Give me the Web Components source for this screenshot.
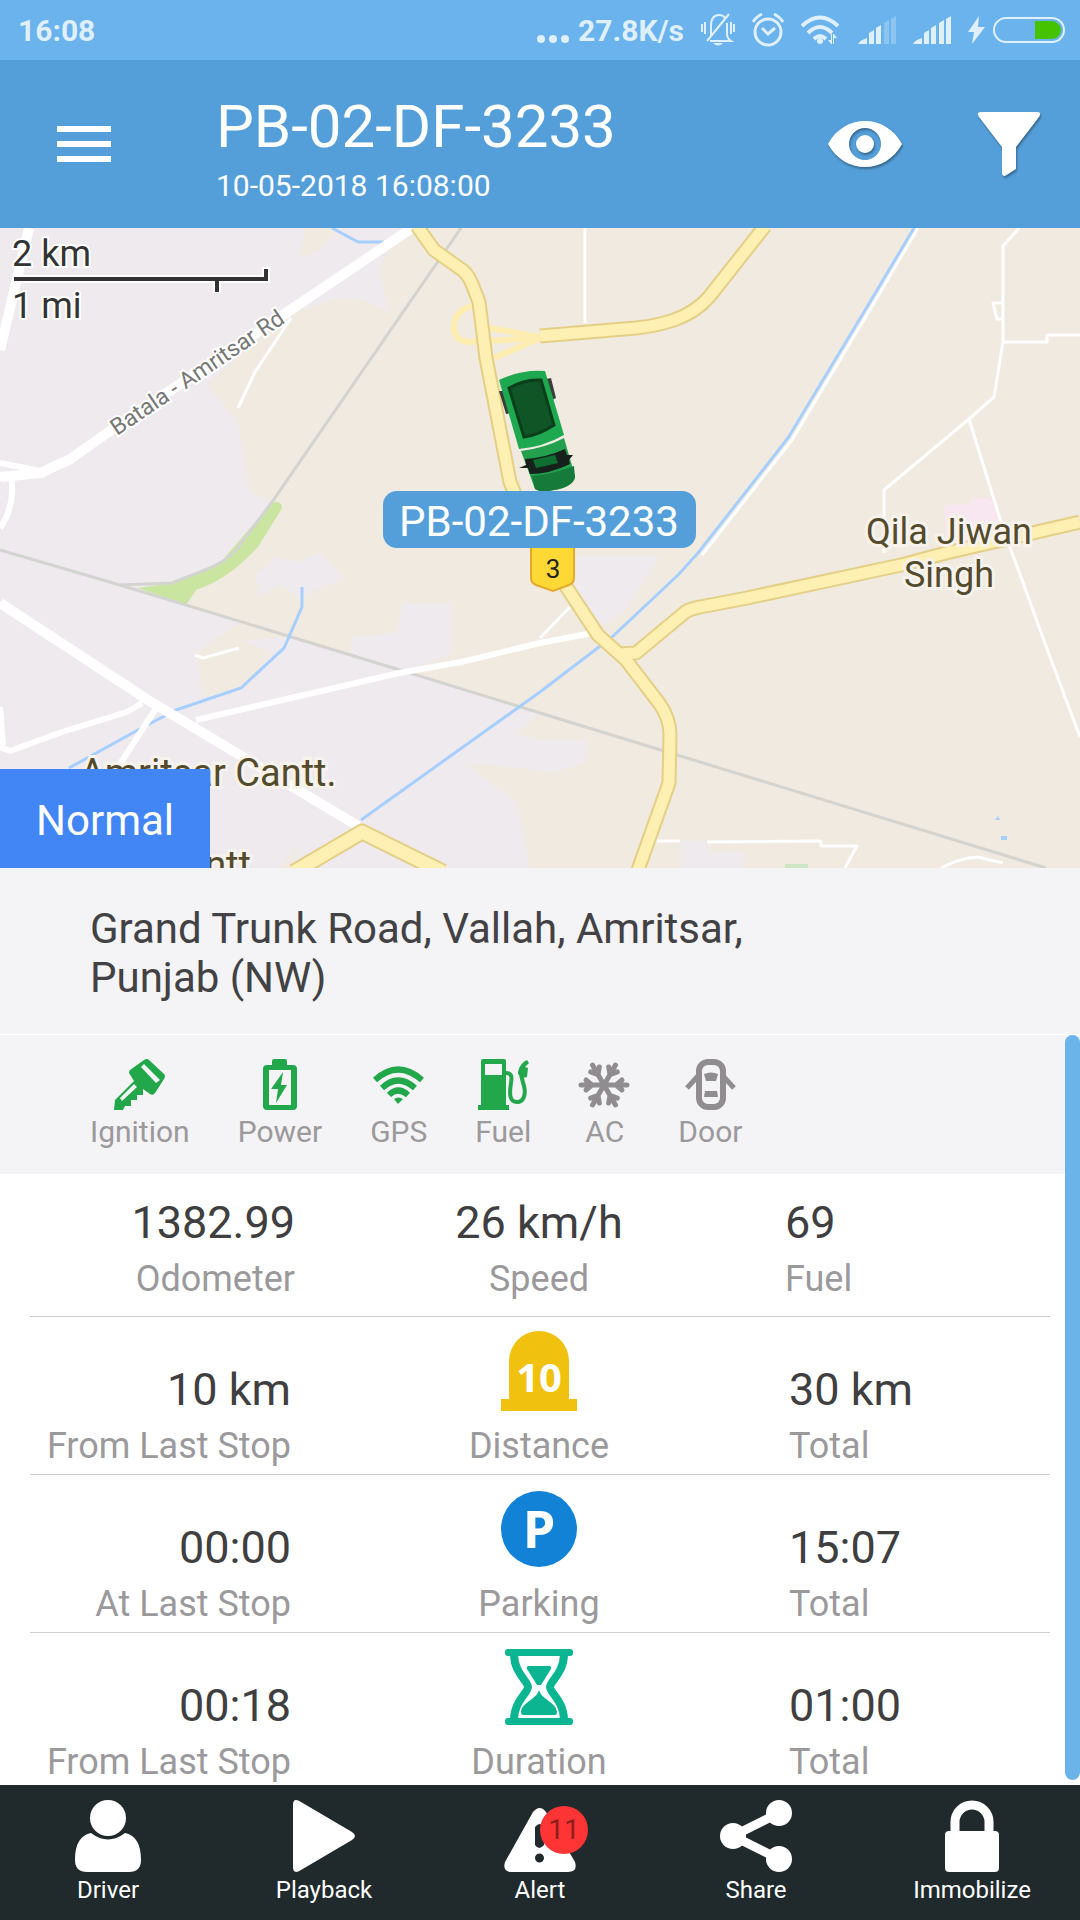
<!DOCTYPE html>
<html lang="en">
<head>
<meta charset="utf-8">
<meta name="viewport" content="width=device-width, initial-scale=1">
<title>PB-02-DF-3233</title>
<style>
  html, body {
    margin: 0;
    height: 100%;
  }
  body {
    font-family: Roboto, "Liberation Sans", sans-serif;
    background: #fff;
  }
</style>
</head>
<body>
<vehicle-page></vehicle-page>

<script>
  // Every icon of the app: [width, height, markup]
  const ICONS = {
    dots: [34, 10, `<circle cx="5" cy="5" r="4"/><circle cx="17" cy="5" r="4"/><circle cx="29" cy="5" r="4"/>`],
    mute: [34, 34, `
      <g fill="none" stroke="currentColor" stroke-width="2">
        <path d="M10 23V13c0-7 3-11 8-11 3 0 5 1 6 3M26 10v11c0 3 1 5 4 7H9M6 28L28 1"/>
        <path d="M4 9v12M1 11v8M30 9v12M33 11v8"/>
      </g>
      <path d="M12 30h10q-5 5-10 0z"/>`],
    alarm: [32, 34, `
      <g fill="none" stroke="currentColor">
        <circle cx="16" cy="19" r="13" stroke-width="3"/>
        <path d="M10 15l6 6 7-6" stroke-width="3"/>
        <path d="M1 9q3-5 9-8M31 9q-3-5-9-8" stroke-width="3"/>
      </g>`],
    netWifi: [40, 30, `
      <g fill="none" stroke="currentColor" stroke-width="4">
        <path d="M1 11q18-17 36 0M7 18q12-12 24 0M13 24q6-6 12 0"/>
      </g>
      <circle cx="19" cy="26" r="3"/>
      <path d="M30 19h1v10h-1l-3-4h3zM33 29h-1V19h1l3 4h-3z"/>`],
    signalLow: [38, 28, `
      <path d="M0 28q2-4 9-6v6zM11 17l5-3v14h-5zM18 12l5-3v19h-5z"/>
      <path opacity=".3" d="M26 7l5-3v24h-5zM33 3l5-3v28h-5z"/>`],
    signal: [38, 28, `<path d="M0 28q2-4 9-6v6zM11 17l5-3v14h-5zM18 12l5-3v19h-5zM26 7l5-3v24h-5zM33 3l5-3v28h-5z"/>`],
    charge: [17, 28, `<path d="M11 0L0 16h6L4 28l13-17h-7z"/>`],
    battery: [72, 26, `
      <rect x="1" y="1" width="70" height="24" rx="12" fill="none" stroke="currentColor" stroke-width="2"/>
      <path fill="#45c300" d="M42 4h17a9 9 0 0 1 0 18H42z"/>`],
    menu: [54, 36, `<path d="M0 0h54v6H0zM0 15h54v6H0zM0 30h54v6H0z"/>`],
    eye: [74, 46, `
      <path fill-rule="evenodd" d="M0 23C8 8 22 0 37 0s29 8 37 23C66 38 52 46 37 46S8 38 0 23zm21 0a16 16 0 1 0 32 0a16 16 0 1 0-32 0z"/>
      <circle cx="37" cy="23" r="9"/>`],
    filter: [62, 64, `<path d="M3 0h56q5 0 2 5L38 35v22l-11 7q-3 0-3-3V35L1 5q-3-5 2-5z"/>`],
    key: [51, 51, `
      <path fill-rule="evenodd" d="M30 1q3-2 5 0l15 14q2 2 0 5l-9 14q-2 3-5 1l-7-5v6h-6v5h-6v6h-6l-2 4H0l1-10L20 22l-5-8q0-2 1-3zM30 5l-3 3 15 16 4-3zM20 25L6 39l2 3 15-14z"/>`],
    power: [34, 51, `
      <path fill-rule="evenodd" d="M12 0h10q2 0 2 2v4h6q4 0 4 4v37q0 4-4 4H4q-4 0-4-4V10q0-4 4-4h5V2q0-2 3-2zM6 11v35h22V11z"/>
      <path d="M20 13L8 30h7l-2 14 11-18h-6z"/>`],
    gps: [51, 38, `
      <g fill="none" stroke="currentColor" stroke-width="6">
        <path d="M2 14Q25-7 49 14M9 22Q25 7 42 22M16 29Q25 20 35 29"/>
      </g>
      <path d="M21 33q4-3 9 0l-5 5z"/>`],
    fuel: [51, 51, `
      <path fill-rule="evenodd" d="M5 0h21q2 0 2 2v44h3v5H0v-5h3V2q0-2 2-2zM7 5v11h17V5z"/>
      <path fill="none" stroke="currentColor" stroke-width="4" d="M28 14c6 0 6 4 5 10-2 12-1 19 6 19s9-8 7-16l-3-11"/>
      <path d="M49 1l2 3-4 4 3 1-1 9-5 1-4-4c0-6 4-12 9-14z"/>`],
    ac: [51, 46, `
      <g fill="none" stroke="currentColor" stroke-width="5" stroke-linecap="round">
        ${[0, 60, 120, 180, 240, 300].map(a =>
          `<path transform="rotate(${a} 25 23)" d="M25 23h23M43 18l-6 5 6 5"/>`).join("")}
      </g>`],
    door: [51, 51, `
      <rect x="14" y="3" width="24" height="45" rx="9" fill="none" stroke="currentColor" stroke-width="6"/>
      <path d="M19 15q7-3 14 0l-2 7H21zM20 32h12l1 6H19z"/>
      <path fill="none" stroke="currentColor" stroke-width="5" d="M13 17L2 29M38 17l11 12"/>`],
    distance: [76, 80, `
      <path fill="#f0c20f" d="M0 68h8V30a30 30 0 0 1 60 0v38h8v12H0z"/>
      <text x="38" y="61" text-anchor="middle" font-family="Open Sans" font-weight="700" font-size="40" fill="#fff">10</text>`],
    parking: [76, 76, `
      <circle cx="38" cy="38" r="38" fill="#1182d5"/>
      <text x="38" y="57" text-anchor="middle" font-family="Open Sans" font-weight="700" font-size="52" fill="#fff">P</text>`],
    duration: [68, 76, `
      <g fill="#0bb592">
        <rect width="68" height="7" rx="3"/><rect y="69" width="68" height="7" rx="3"/>
        <path d="M23 17h22q2 1 1 3L36 36h-4L22 20q-1-2 1-3zM34 41c3 10 17 12 18 22q0 3-2 3H18q-2 0-2-3c1-10 15-12 18-22z"/>
        <path fill="none" stroke="#0bb592" stroke-width="8" d="M9 5c0 19 14 27 14 33S9 52 9 71M59 5c0 19-14 27-14 33s14 14 14 33"/>
      </g>`],
    driver: [66, 72, `
      <ellipse cx="33" cy="18" rx="18" ry="18"/>
      <path d="M16 33q17 13 34 0c10 2 16 10 16 27q0 12-12 12H12Q0 72 0 60C0 43 6 35 16 33z"/>`],
    playback: [62, 72, `<path d="M0 5q0-8 8-3l51 30q6 4 0 8L8 70q-8 5-8-3z"/>`],
    alert: [72, 64, `
      <path fill-rule="evenodd" d="M29 4q7-8 13 0l29 50q3 10-7 10H8q-10 0-7-10zM31 19v18q4 6 9 0V19q-4-6-9 0zM31 50a4 4 0 1 0 9 0a4 4 0 1 0-9 0z"/>`],
    share: [72, 72, `
      <path fill="none" stroke="currentColor" stroke-width="9" d="M59 13L13 36l46 23"/>
      <circle cx="59" cy="13" r="13"/><circle cx="13" cy="36" r="13"/><circle cx="59" cy="59" r="13"/>`],
    lock: [54, 72, `
      <path fill="none" stroke="currentColor" stroke-width="9" d="M10 34V22a17 17 0 0 1 34 0v12"/>
      <rect y="31" width="54" height="41" rx="4"/>`],
  };

  class AppIcon extends HTMLElement {
    constructor() {
      super();
      this.attachShadow({ mode: "open" });
    }
    connectedCallback() {
      const [w, h, body] = ICONS[this.getAttribute("name")];
      this.shadowRoot.innerHTML = `
        <style>
          :host { display: block; flex: none; }
          svg { display: block; fill: currentColor; overflow: visible; }
        </style>
        <svg width="${w}" height="${h}" viewBox="0 0 ${w} ${h}" aria-hidden="true">${body}</svg>`;
    }
  }

  class StatusBar extends HTMLElement {
    constructor() {
      super();
      this.attachShadow({ mode: "open" }).innerHTML = `
        <style>
          :host {
            display: flex;
            align-items: center;
            justify-content: space-between;
            height: 60px;
            padding: 0 15px 0 18px;
            background: #6ab3ec;
            color: #dfeffb;
            font-size: 30px;
            font-weight: 700;
          }
          .tray { display: flex; align-items: center; gap: 17px; }
          .net { display: flex; align-items: center; gap: 8px; }
          .dots { padding-top: 18px; }
          .bat { display: flex; align-items: center; gap: 8px; }
        </style>
        <span>16:08</span>
        <div class="tray">
          <span class="net"><app-icon class="dots" name="dots"></app-icon>27.8K/s</span>
          <app-icon name="mute"></app-icon>
          <app-icon name="alarm"></app-icon>
          <app-icon name="netWifi"></app-icon>
          <app-icon name="signalLow"></app-icon>
          <app-icon name="signal"></app-icon>
          <span class="bat"><app-icon name="charge"></app-icon><app-icon name="battery"></app-icon></span>
        </div>`;
    }
  }

  class AppHeader extends HTMLElement {
    constructor() {
      super();
      this.attachShadow({ mode: "open" }).innerHTML = `
        <style>
          :host {
            display: flex;
            align-items: center;
            height: 168px;
            padding: 0 40px 0 57px;
            box-sizing: border-box;
            background: #549fd9;
            color: #fff;
          }
          button {
            padding: 0;
            border: 0;
            background: none;
            color: inherit;
          }
          .titles { flex: 1; padding: 14px 0 0 105px; }
          .actions { display: flex; align-items: center; gap: 76px; }
          .actions app-icon { filter: drop-shadow(1px 2px 1px rgba(0, 0, 0, .35)); }
          ::slotted(h1) { margin: 0; font-size: 60px; line-height: 70px; font-weight: 400; }
          ::slotted(p) { margin: 0; font-size: 30px; line-height: 48px; }
        </style>
        <button aria-label="Menu"><app-icon name="menu"></app-icon></button>
        <div class="titles"><slot></slot></div>
        <div class="actions">
          <button aria-label="View"><app-icon name="eye"></app-icon></button>
          <button aria-label="Filter"><app-icon name="filter"></app-icon></button>
        </div>`;
    }
  }

  class MapView extends HTMLElement {
    constructor() {
      super();
      const main = "M417 226L434 250 458 267Q468 273 472 284L479 302 486 358 510 482 530 530 567 588 598 635 626 660 659 703Q670 718 670 735L669 783 638 870";
      const branch = "M620 654L636 653 683 614Q688 609 700 607L747 598 901 565 946 553 1080 522";
      const upper = "M765 226L709 297Q696 312 674 320 656 326 636 328L540 336";
      const fork = "M294 872L362 832 443 872";
      this.attachShadow({ mode: "open" }).innerHTML = `
        <style>
          :host {
            display: block;
            position: relative;
            aspect-ratio: 1080 / 640;
            overflow: hidden;
            background: #f0eae0;
          }
          svg { display: block; width: 100%; height: 100%; }
          .place { font-size: 36px; fill: #544a2c; stroke: #f7f3ec; stroke-width: 6px; paint-order: stroke; }
          .scale { font-size: 36px; fill: #333; stroke: #fff; stroke-width: 4px; paint-order: stroke; }
          .white { fill: none; stroke: #fff; stroke-linejoin: round; }
          .rail { fill: none; stroke: #d3d3d0; stroke-width: 3px; }
          .water { fill: none; stroke: #a6cfff; stroke-width: 3px; }
          button {
            position: absolute;
            left: 0;
            bottom: 0;
            padding: 27px 36px 23px;
            border: 0;
            background: #4285f4;
            color: #fff;
            font: 42px/49px Roboto, sans-serif;
          }
        </style>
        <svg viewBox="0 228 1080 640" preserveAspectRatio="xMidYMid slice">
          <g fill="#eeeaee">
            <path d="M0 228H305L300 258 320 250 340 228H400L379 268 389 312 358 298H337L286 315 207 385 238 422 250 492 272 503 196 590 186 605 241 622 196 653 203 697 241 690 272 653 241 640 290 637 351 657V637L396 633 403 603H451V653L406 673 540 713 517 733 540 740 588 740 585 763 554 772 465 763 517 803 530 868H292L300 840 280 868H0z"/>
            <path d="M255 575L275 557 300 562 320 552 345 580 318 588 300 600 280 583 260 597z"/>
            <path d="M574 556H660L626 610 592 632 570 590z"/>
            <path d="M681 841H706L709 852H745V868H681z"/>
          </g>
          <path fill="#f8e7f1" d="M945 505H970V498H991L1000 520 990 535H945z"/>
          <path fill="#cae59f" d="M272 503Q282 500 282 508L258 547 248 557Q225 580 196 590L186 605 138 588 172 583 220 563z"/>
          <path fill="#cfe6c5" d="M785 864h23v6h-23z"/>
          <path fill="#a6cfff" d="M995 820l3-4 2 4zM1001 836h6v4h-6z"/>

          <g class="rail">
            <path d="M461 228L272 502 236 550Q224 563 205 570L172 583 120 585"/>
            <path d="M0 550L120 585 400 670 540 713 1046 868"/>
          </g>
          <g class="water">
            <path d="M302 587V607L284 648 241 688 176 710 138 730 69 768"/>
            <path d="M332 228L358 242H384"/>
          </g>
          <path class="white" stroke-width="3" d="M918 228L871 308 792 440 702 555"/>
          <path class="water" stroke-width="4" d="M914 228L867 307 788 438 698 553 678 575 612 637 540 692 361 820"/>

          <g class="white" stroke-width="10">
            <path d="M412 228L286 313 107 433 69 460Q54 466 41 473L0 477"/>
            <path d="M29 228L0 350"/>
            <path d="M0 603L148 700 358 826"/>
          </g>
          <g class="white" stroke-width="6">
            <path d="M0 463L41 471M11 477Q16 505 0 528"/>
            <path d="M196 720L399 673 461 662 540 643 592 633"/>
            <path d="M142 703L127 712 62 732 10 751 0 747M0 707L3 745M155 710L120 764"/>
          </g>
          <g class="white" stroke-width="3">
            <path d="M195 655L203 658 239 648M291 318L255 372 238 408M540 638L570 607"/>
            <path d="M585 228V323M1019 228L1003 246V342L994 397 969 419 884 490V553"/>
            <path d="M969 419L1001 522 1011 550 1050 657 1080 737M1003 342H1047V335H1080M1003 303H993L997 319H1003"/>
            <path d="M657 841H680M707 842L821 841V846H857L845 868M941 868Q960 858 977 857L1003 863"/>
          </g>

          <path fill="none" stroke="#fdedb0" stroke-width="6" d="M475 305Q455 310 454 325 453 341 468 342L540 338M490 328L545 338M494 358L545 336"/>
          <g fill="none" stroke-linejoin="round">
            <path stroke="#e4cf85" stroke-width="15" d="${main}"/>
            <path stroke="#e4cf85" stroke-width="15" d="${branch}"/>
            <path stroke="#e4cf85" stroke-width="15" d="${upper}"/>
            <path stroke="#e4cf85" stroke-width="17" d="${fork}"/>
            <path stroke="#feefb3" stroke-width="11" d="${main}"/>
            <path stroke="#feefb3" stroke-width="11" d="${branch}"/>
            <path stroke="#feefb3" stroke-width="11" d="${upper}"/>
            <path stroke="#feefb3" stroke-width="13" d="${fork}"/>
          </g>

          <g text-anchor="middle" class="place">
            <text x="949" y="544">Qila Jiwan</text>
            <text x="949" y="587">Singh</text>
          </g>
          <text class="place" x="80" y="786" style="font-size: 38px">Amritsar Cantt.</text>
          <text class="place" x="251" y="878" text-anchor="end" style="font-size: 38px">Cantt</text>
          <text font-size="23" fill="#777" stroke="#fff" stroke-width="4" paint-order="stroke" transform="translate(117 436) rotate(-34)">Batala - Amritsar Rd</text>

          <text class="scale" x="12" y="266">2 km</text>
          <text class="scale" x="12" y="318">1 mi</text>
          <path fill="none" stroke="#fff" stroke-width="8" d="M12 279H270M266 281V267M217 279V293"/>
          <path fill="none" stroke="#333" stroke-width="4" d="M14 279H268M266 279V269M217 279V292"/>

          <path fill="#fed835" stroke="#e2ab2b" stroke-width="2" d="M535 540H570Q574 540 574 545V578Q574 583 569 585L553 591 536 585Q531 583 531 578V545Q531 540 535 540z"/>
          <text x="553" y="578" font-size="26" fill="#222" text-anchor="middle">3</text>

          <!-- tracked vehicle, heading down the road -->
          <g>
            <path fill="#3a3f3a" d="M499 391l6 0 6 22-5 1zM546 379l5-1 5 20-4 2z"/>
            <path fill="#1ea850" d="M499 380Q522 369 545 371L564 435Q543 447 519 449z"/>
            <path fill="#0f5526" stroke="#0b3f1b" stroke-width="3" d="M509 388Q525 379 541 380L554 425Q539 435 524 437z"/>
            <path fill="#22a04e" d="M521 451Q545 448 564 438L575 476Q573 487 554 490 541 493 535 489z"/>
            <path fill="#157a3a" d="M532 476Q554 474 574 466L575 478Q572 487 554 490 541 493 535 489z"/>
            <path fill="#17211b" d="M519 468l7-3-1-6Q545 458 565 449l2 6 6 0-4 5 1 4Q550 474 530 474l-2-6z"/>
            <path fill="#0f6f31" d="M533 460l22-5 3 8-22 5z"/>
          </g>
          <rect x="383" y="491" width="313" height="57" rx="14" fill="#549fd9"/>
          <text x="539" y="536" font-size="42" fill="#fff" text-anchor="middle">PB-02-DF-3233</text>
        </svg>
        <button>Normal</button>`;
    }
  }

  class AddressPanel extends HTMLElement {
    constructor() {
      super();
      this.attachShadow({ mode: "open" }).innerHTML = `
        <style>
          :host {
            display: block;
            padding: 36px 320px 32px 90px;
            border-bottom: 1px solid #fff;
            background: #f4f3f5;
            color: #424144;
            font-size: 42px;
            line-height: 49px;
          }
        </style>
        <slot></slot>`;
    }
  }

  class SensorItem extends HTMLElement {
    constructor() {
      super();
      this.attachShadow({ mode: "open" });
    }
    connectedCallback() {
      this.shadowRoot.innerHTML = `
        <style>
          :host { display: flex; flex-direction: column; align-items: center; color: #9b999c; font-size: 30px; line-height: 35px; }
          .icon { display: flex; align-items: center; height: 51px; margin-bottom: 4px; color: #8f8d90; }
          :host([on]) .icon { color: #22a74a; }
        </style>
        <span class="icon"><app-icon name="${this.getAttribute("icon")}"></app-icon></span>
        <slot></slot>`;
    }
  }

  class SensorStrip extends HTMLElement {
    constructor() {
      super();
      this.attachShadow({ mode: "open" }).innerHTML = `
        <style>
          :host { display: flex; gap: 48px; padding: 24px 90px 25px; background: #f4f3f5; }
        </style>
        <slot></slot>`;
    }
  }

  // One line of readings: value over label in each of three columns
  class StatRow extends HTMLElement {
    constructor() {
      super();
      this.attachShadow({ mode: "open" });
    }
    connectedCallback() {
      const get = name => this.getAttribute(name);
      const middle = get("icon")
        ? `<app-icon name="${get("icon")}"></app-icon>`
        : `<span class="value">${get("mid-value")}</span>`;
      this.shadowRoot.innerHTML = `
        <style>
          :host {
            display: grid;
            grid-template-columns: repeat(3, 1fr);
            height: 157px;
            margin: 0 30px;
            border-bottom: 1px solid #cfcfcf;
            --edge: 79px;
          }
          :host([compact]) { height: 142px; --edge: 75px; }
          :host(:last-of-type) { border-bottom: 0; }
          div { display: flex; flex-direction: column; justify-content: flex-end; padding-bottom: 7px; }
          :host([compact]) div { padding-bottom: 16px; }
          .left { align-items: flex-end; padding-right: var(--edge); }
          .mid { align-items: center; padding-right: 2px; }
          .right { align-items: flex-start; padding-left: var(--edge); }
          .icon { display: flex; align-items: center; height: 80px; margin-bottom: 14px; }
          :host([compact]) .icon { height: auto; margin-bottom: 8px; }
          .value { margin-bottom: 8px; color: #3f3e40; font-size: 45px; line-height: 54px; }
          .icon .value { margin: 0; }
          .label { color: #9b999c; font-size: 36px; line-height: 42px; }
        </style>
        <div class="left"><span class="value">${get("left-value")}</span><span class="label">${get("left")}</span></div>
        <div class="mid"><span class="icon">${middle}</span><span class="label">${get("mid")}</span></div>
        <div class="right"><span class="value">${get("right-value")}</span><span class="label">${get("right")}</span></div>`;
    }
  }

  class DetailScroller extends HTMLElement {
    constructor() {
      super();
      this.attachShadow({ mode: "open" }).innerHTML = `
        <style>
          :host { display: block; flex: 1; min-height: 0; position: relative; overflow: hidden; background: #fff; }
          .bar {
            position: absolute;
            top: 0;
            right: 0;
            bottom: 5px;
            width: 15px;
            border-radius: 8px;
            background: #6bb4ea;
          }
        </style>
        <slot></slot>
        <span class="bar"></span>`;
    }
  }

  class NavButton extends HTMLElement {
    constructor() {
      super();
      this.attachShadow({ mode: "open" });
    }
    connectedCallback() {
      const badge = this.getAttribute("badge");
      this.shadowRoot.innerHTML = `
        <style>
          :host { display: block; flex: 1; }
          button {
            display: flex;
            flex-direction: column;
            align-items: center;
            width: 100%;
            padding: 15px 0 16px;
            border: 0;
            background: none;
            color: #fff;
            font: 24px/28px Roboto, sans-serif;
          }
          .icon { display: flex; align-items: flex-end; position: relative; height: 72px; margin-bottom: 4px; }
          .badge {
            position: absolute;
            top: 6px;
            right: -12px;
            width: 48px;
            border-radius: 50%;
            background: #ff3535;
            color: #8f1d1d;
            font-size: 28px;
            line-height: 48px;
            text-align: center;
          }
        </style>
        <button>
          <span class="icon">
            <app-icon name="${this.getAttribute("icon")}"></app-icon>
            ${badge ? `<span class="badge">${badge}</span>` : ""}
          </span>
          <slot></slot>
        </button>`;
    }
  }

  class BottomNav extends HTMLElement {
    constructor() {
      super();
      this.attachShadow({ mode: "open" }).innerHTML = `
        <style>
          :host { display: block; background: #20292c; }
          nav { display: flex; }
        </style>
        <nav><slot></slot></nav>`;
    }
  }

  class VehiclePage extends HTMLElement {
    constructor() {
      super();
      this.attachShadow({ mode: "open" }).innerHTML = `
        <style>
          :host { display: flex; flex-direction: column; height: 100vh; overflow: hidden; }
        </style>
        <status-bar></status-bar>
        <app-header>
          <h1>PB-02-DF-3233</h1>
          <p>10-05-2018 16:08:00</p>
        </app-header>
        <map-view></map-view>
        <address-panel>Grand Trunk Road, Vallah, Amritsar, Punjab (NW)</address-panel>
        <detail-scroller>
          <sensor-strip>
            <sensor-item icon="key" on>Ignition</sensor-item>
            <sensor-item icon="power" on>Power</sensor-item>
            <sensor-item icon="gps" on>GPS</sensor-item>
            <sensor-item icon="fuel" on>Fuel</sensor-item>
            <sensor-item icon="ac">AC</sensor-item>
            <sensor-item icon="door">Door</sensor-item>
          </sensor-strip>
          <stat-row compact left-value="1382.99" left="Odometer" mid-value="26 km/h" mid="Speed" right-value="69" right="Fuel"></stat-row>
          <stat-row icon="distance" left-value="10 km" left="From Last Stop" mid="Distance" right-value="30 km" right="Total"></stat-row>
          <stat-row icon="parking" left-value="00:00" left="At Last Stop" mid="Parking" right-value="15:07" right="Total"></stat-row>
          <stat-row icon="duration" left-value="00:18" left="From Last Stop" mid="Duration" right-value="01:00" right="Total"></stat-row>
        </detail-scroller>
        <bottom-nav>
          <nav-button icon="driver">Driver</nav-button>
          <nav-button icon="playback">Playback</nav-button>
          <nav-button icon="alert" badge="11">Alert</nav-button>
          <nav-button icon="share">Share</nav-button>
          <nav-button icon="lock">Immobilize</nav-button>
        </bottom-nav>`;
    }
  }

  customElements.define("app-icon", AppIcon);
  customElements.define("status-bar", StatusBar);
  customElements.define("app-header", AppHeader);
  customElements.define("map-view", MapView);
  customElements.define("address-panel", AddressPanel);
  customElements.define("sensor-item", SensorItem);
  customElements.define("sensor-strip", SensorStrip);
  customElements.define("stat-row", StatRow);
  customElements.define("detail-scroller", DetailScroller);
  customElements.define("nav-button", NavButton);
  customElements.define("bottom-nav", BottomNav);
  customElements.define("vehicle-page", VehiclePage);
</script>
</body>
</html>
